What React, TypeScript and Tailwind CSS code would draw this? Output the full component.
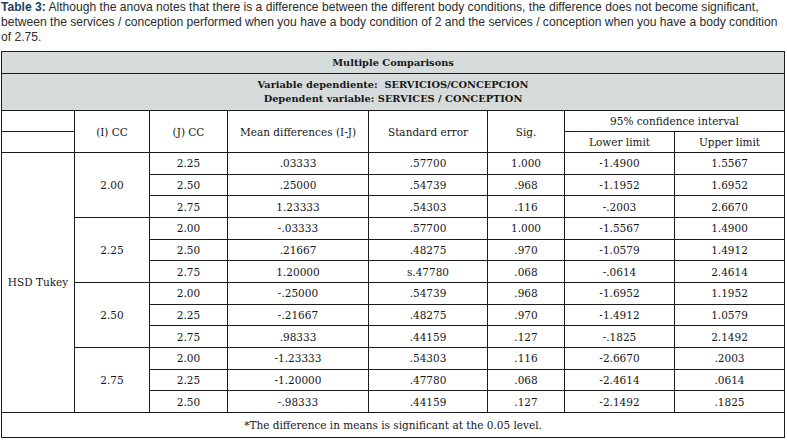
import React from "react";

type Row = [string, string, string, string, string, string];

const groups: { cc: string; rows: Row[] }[] = [
  {
    cc: "2.00",
    rows: [
      ["2.25", ".03333", ".57700", "1.000", "-1.4900", "1.5567"],
      ["2.50", ".25000", ".54739", ".968", "-1.1952", "1.6952"],
      ["2.75", "1.23333", ".54303", ".116", "-.2003", "2.6670"],
    ],
  },
  {
    cc: "2.25",
    rows: [
      ["2.00", "-.03333", ".57700", "1.000", "-1.5567", "1.4900"],
      ["2.50", ".21667", ".48275", ".970", "-1.0579", "1.4912"],
      ["2.75", "1.20000", "s.47780", ".068", "-.0614", "2.4614"],
    ],
  },
  {
    cc: "2.50",
    rows: [
      ["2.00", "-.25000", ".54739", ".968", "-1.6952", "1.1952"],
      ["2.25", "-.21667", ".48275", ".970", "-1.4912", "1.0579"],
      ["2.75", ".98333", ".44159", ".127", "-.1825", "2.1492"],
    ],
  },
  {
    cc: "2.75",
    rows: [
      ["2.00", "-1.23333", ".54303", ".116", "-2.6670", ".2003"],
      ["2.25", "-1.20000", ".47780", ".068", "-2.4614", ".0614"],
      ["2.50", "-.98333", ".44159", ".127", "-2.1492", ".1825"],
    ],
  },
];

const cell = "border border-[#1c1c1c] p-0 text-center align-middle";

export default function App() {
  return (
    <div className="w-[787px] h-[441px] bg-white overflow-hidden">
      <div
        className="text-[12.1px] leading-[15px] text-[#2b2b2b] pl-[1px] whitespace-nowrap"
        style={{ fontFamily: '"Liberation Sans", Arial, sans-serif' }}
      >
        <div>
          <span className="font-bold text-[#1d3d63]">Table 3:</span> Although the anova notes that there is a difference between the different body conditions, the difference does not become significant,
        </div>
        <div>
          between the services / conception performed when you have a body condition of 2 and the services / conception when you have a body condition
        </div>
        <div>of 2.75.</div>
      </div>
      <table
        className="mt-[6px] ml-[1px] w-[784px] table-fixed border-collapse text-[10.5px] leading-[14px] text-[#161616]"
        style={{ fontFamily: '"DejaVu Serif", serif' }}
      >
        <colgroup>
          <col className="w-[73px]" />
          <col className="w-[75px]" />
          <col className="w-[78px]" />
          <col className="w-[141px]" />
          <col className="w-[119px]" />
          <col className="w-[77px]" />
          <col className="w-[110px]" />
          <col className="w-[110px]" />
        </colgroup>
        <tbody>
          <tr className="h-[22px] bg-[#d6dcdc]">
            <td colSpan={8} className={`${cell} font-bold text-[9.8px]`}>
              Multiple Comparisons
            </td>
          </tr>
          <tr className="h-[37px] bg-[#d6dcdc]">
            <td colSpan={8} className={`${cell} font-bold text-[9.8px]`}>
              <div>Variable dependiente:&nbsp; SERVICIOS/CONCEPCION</div>
              <div>Dependent variable: SERVICES / CONCEPTION</div>
            </td>
          </tr>
          <tr className="h-[21px]">
            <td className={cell}></td>
            <td rowSpan={2} className={cell}>(I) CC</td>
            <td rowSpan={2} className={cell}>(J) CC</td>
            <td rowSpan={2} className={cell}>Mean differences (I-J)</td>
            <td rowSpan={2} className={cell}>Standard error</td>
            <td rowSpan={2} className={cell}>Sig.</td>
            <td colSpan={2} className={cell}>95% confidence interval</td>
          </tr>
          <tr className="h-[21px]">
            <td className={cell}></td>
            <td className={cell}>Lower limit</td>
            <td className={cell}>Upper limit</td>
          </tr>
          {groups.map((g, gi) =>
            g.rows.map((r, ri) => (
              <tr key={`${gi}-${ri}`} className="h-[21.67px]">
                {gi === 0 && ri === 0 && (
                  <td rowSpan={12} className={cell}>
                    HSD Tukey
                  </td>
                )}
                {ri === 0 && (
                  <td rowSpan={3} className={cell}>
                    {g.cc}
                  </td>
                )}
                {r.map((v, vi) => (
                  <td key={vi} className={cell}>
                    {v}
                  </td>
                ))}
              </tr>
            ))
          )}
          <tr className="h-[25px]">
            <td colSpan={8} className={cell}>
              *The difference in means is significant at the 0.05 level.
            </td>
          </tr>
        </tbody>
      </table>
    </div>
  );
}
